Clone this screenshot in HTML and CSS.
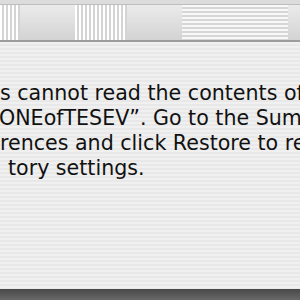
FILE: index.html
```html
<!DOCTYPE html>
<html>
<head>
<meta charset="utf-8">
<link rel="stylesheet" href="styles.css">
</head>
<body>
<div class="window">
  <div class="titlebar"></div>
  <div class="toolbar">
    <div class="seg stripes w20"></div>
    <div class="seg plain w55"></div>
    <div class="seg stripes w52"></div>
    <div class="seg plain w55"></div>
    <div class="seg dots w54"></div>
    <div class="seg dots w52"></div>
    <div class="seg plain w12"></div>
  </div>
  <div class="content">
    <div class="message">
      <div class="line l1">s cannot read the contents of</div>
      <div class="line l2">ONEofTESEV”. Go to the Summary</div>
      <div class="line l3">rences and click Restore to restore</div>
      <div class="line l4">tory settings.</div>
    </div>
  </div>
  <div class="bottom"></div>
</div>
</body>
</html>
```
FILE: styles.css
```css
html, body {
  margin: 0;
  padding: 0;
  width: 300px;
  height: 300px;
  overflow: hidden;
}
.window {
  width: 300px;
  height: 300px;
  display: flex;
  flex-direction: column;
  overflow: hidden;
}
.titlebar {
  height: 4px;
  background: #dcdcdc;
  border-bottom: 1px solid #bdbdbd;
}
.toolbar {
  height: 35px;
  display: flex;
  border-bottom: 2px solid #9c9c9c;
  background: linear-gradient(#ebebeb, #d3d3d3);
}
.seg { height: 100%; flex: none; }
.w20 { width: 20px; }
.w55 { width: 55px; }
.w52 { width: 52px; }
.w54 { width: 54px; }
.w12 { width: 12px; }
.stripes {
  background: repeating-linear-gradient(90deg, #ffffff 0px, #ffffff 2px, #d4d4d4 2px, #d4d4d4 4px);
}
.dots {
  background-color: #d6d6d6;
  background-image:
    linear-gradient(#f8f8f8 0 2px, transparent 2px),
    linear-gradient(90deg, transparent 0 2px, #d6d6d6 2px);
  background-size: 4px 4px, 4px 4px;
}
.content {
  flex: 1;
  background: repeating-linear-gradient(180deg, #f0f0f0 0 2px, #e8e8e8 2px 4px);
  padding-top: 39px;
  overflow: hidden;
}
.message {
  font-family: "DejaVu Sans", "Liberation Sans", sans-serif;
  font-size: 20.6px;
  line-height: 25px;
  color: #111;
}
.line { white-space: nowrap; }
.l1 { margin-left: 0; }
.l2 { margin-left: -1px; }
.l3 { margin-left: 0; }
.l4 { margin-left: 8px; }
.bottom {
  height: 11px;
  background: linear-gradient(#484848, #686868);
}
```
